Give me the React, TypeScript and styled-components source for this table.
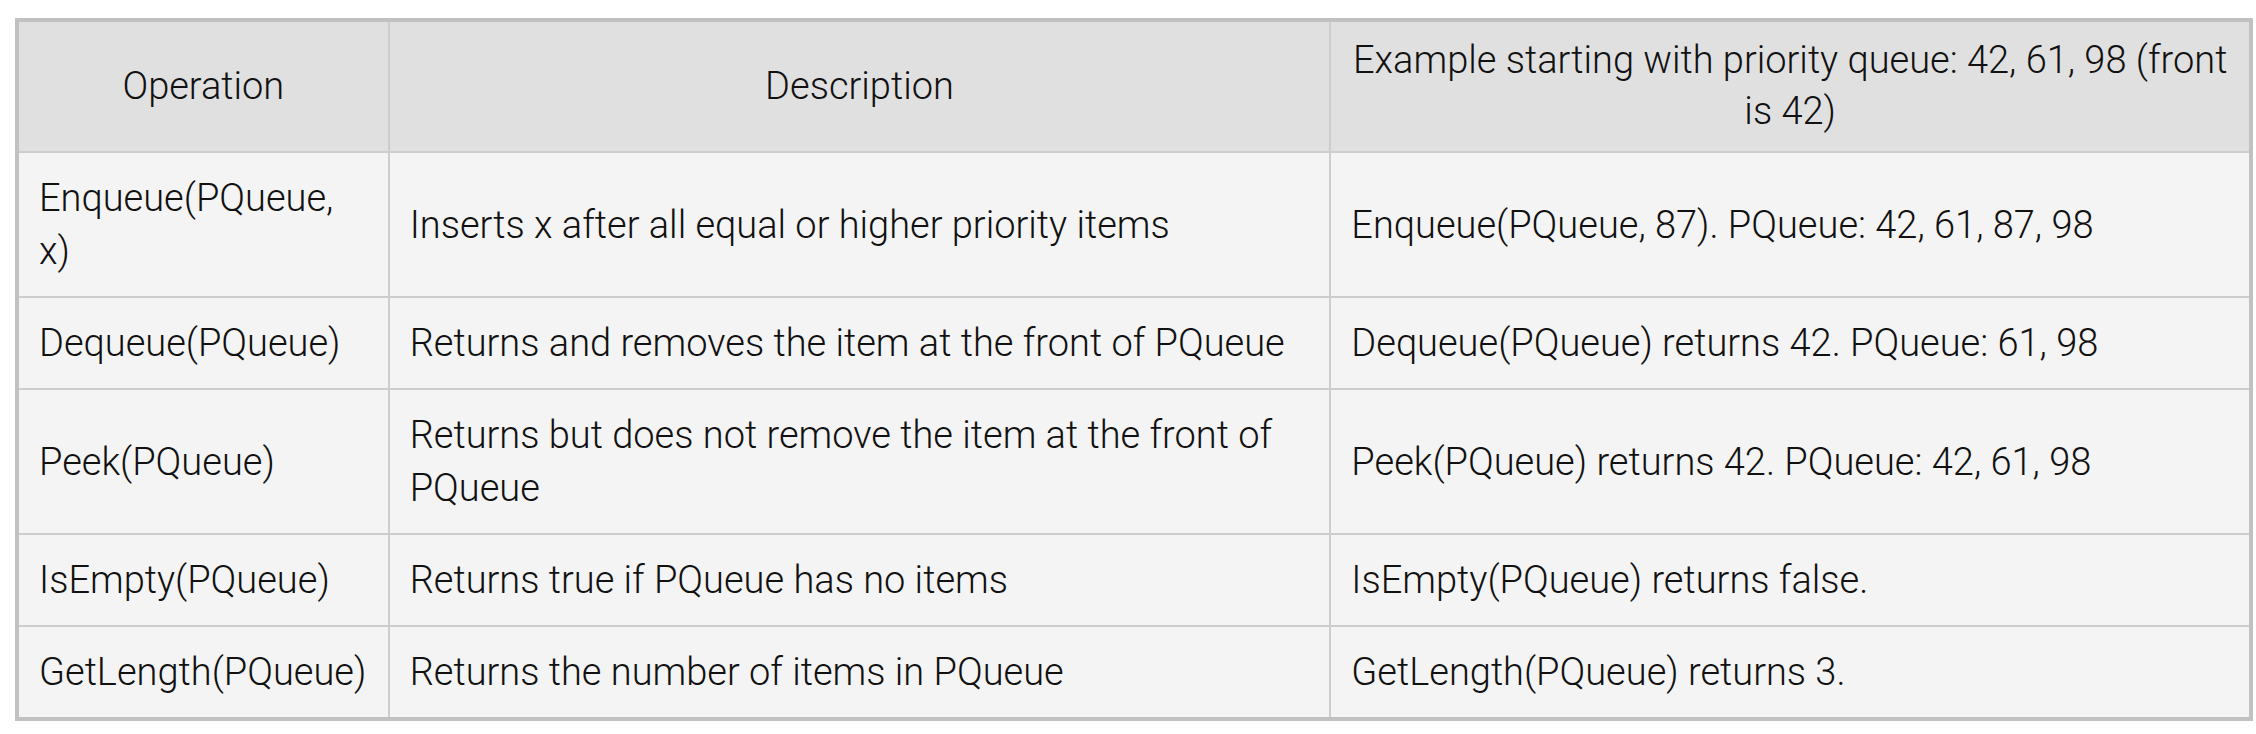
import React from "react";
import styled, { createGlobalStyle } from "styled-components";

const Global = createGlobalStyle`
  html, body { margin: 0; padding: 0; background: #ffffff; }
  body { font-family: Roboto, "Liberation Sans", sans-serif; }
  *, *::before, *::after { box-sizing: border-box; }
`;

const Page = styled.div`
  padding: 18px 0 0 15px;
`;

const Table = styled.table`
  width: 2238px;
  border-collapse: collapse;
  border: 4px solid #c1c1c1;
  font-family: Roboto, "Liberation Sans", sans-serif;
  font-weight: 300;
  font-size: 38px;
  line-height: 53px;
  color: #111;
  table-layout: fixed;
`;

const Col = styled.col<{ $w: number }>`
  width: ${(p) => p.$w}px;
`;

const HeadCell = styled.th`
  background: #e0e0e0;
  font-weight: 300;
  line-height: 51px;
  text-align: center;
  padding: 13px 20px 14px;
  border: 2px solid #cdcdcd;
  border-top: none;
  vertical-align: middle;
`;

const Cell = styled.td`
  background: #f4f4f4;
  text-align: left;
  padding: 19px 20px 18px;
  border: 2px solid #cdcdcd;
  vertical-align: middle;
`;

const rows = [
  ["Enqueue(PQueue, x)", "Inserts x after all equal or higher priority items", "Enqueue(PQueue, 87). PQueue: 42, 61, 87, 98"],
  ["Dequeue(PQueue)", "Returns and removes the item at the front of PQueue", "Dequeue(PQueue) returns 42. PQueue: 61, 98"],
  ["Peek(PQueue)", "Returns but does not remove the item at the front of PQueue", "Peek(PQueue) returns 42. PQueue: 42, 61, 98"],
  ["IsEmpty(PQueue)", "Returns true if PQueue has no items", "IsEmpty(PQueue) returns false."],
  ["GetLength(PQueue)", "Returns the number of items in PQueue", "GetLength(PQueue) returns 3."],
];

export default function App() {
  return (
    <Page>
      <Global />
      <Table>
        <colgroup>
          <Col $w={371} />
          <Col $w={940} />
          <Col $w={919} />
        </colgroup>
        <thead>
          <tr>
            <HeadCell>Operation</HeadCell>
            <HeadCell>Description</HeadCell>
            <HeadCell>Example starting with priority queue: 42, 61, 98 (front is 42)</HeadCell>
          </tr>
        </thead>
        <tbody>
          {rows.map((r) => (
            <tr key={r[0]}>
              {r.map((c, i) => (
                <Cell key={i}>{c}</Cell>
              ))}
            </tr>
          ))}
        </tbody>
      </Table>
    </Page>
  );
}
